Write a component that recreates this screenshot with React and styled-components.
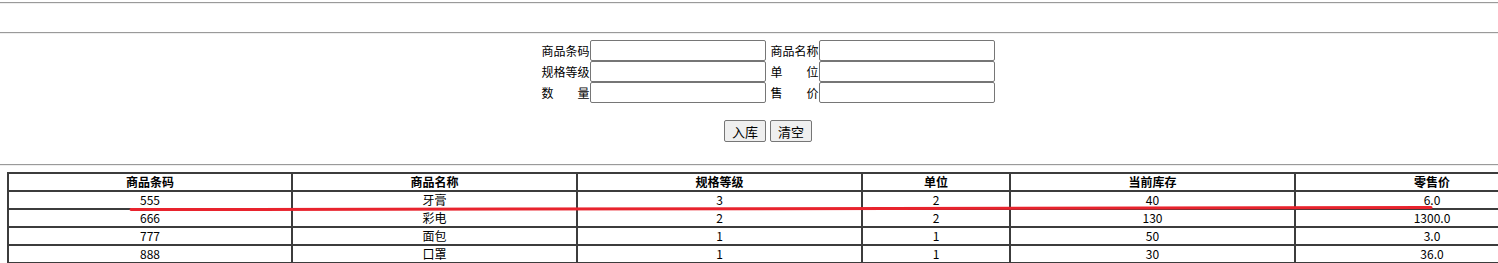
import React from "react";
import styled, { createGlobalStyle } from "styled-components";

const rows = [
    { code: "555", name: "牙膏", spec: "3", unit: "2", stock: "40", price: "6.0" },
    { code: "666", name: "彩电", spec: "2", unit: "2", stock: "130", price: "1300.0" },
    { code: "777", name: "面包", spec: "1", unit: "1", stock: "50", price: "3.0" },
    { code: "888", name: "口罩", spec: "1", unit: "1", stock: "30", price: "36.0" },
];

const columns = [
    { title: "商品条码", key: "code", width: 284 },
    { title: "商品名称", key: "name", width: 285 },
    { title: "规格等级", key: "spec", width: 285 },
    { title: "单位", key: "unit", width: 148 },
    { title: "当前库存", key: "stock", width: 285 },
    { title: "零售价", key: "price", width: 274 },
];

const fields = [
    ["商品条码", "商品名称"],
    ["规格等级", "单　　位"],
    ["数　　量", "售　　价"],
];

const App = () => {
    return (
        <>
            <GlobalStyle />
            <Page>
                <Rule $top={2} $bottom={28} />
                <Rule $top={0} $bottom={6} />
                <StockForm>
                    {fields.map(pair => (
                        <FieldRow key={pair[0]}>
                            <Label>{pair[0]}</Label>
                            <Input />
                            <Label $left>{pair[1]}</Label>
                            <Input />
                        </FieldRow>
                    ))}
                    <ButtonRow>
                        <Button>入库</Button>
                        <Button>清空</Button>
                    </ButtonRow>
                </StockForm>
                <Rule $top={0} $bottom={6} />
                <Table>
                    <colgroup>
                        {columns.map(col => <col key={col.key} style={{ width: col.width }} />)}
                    </colgroup>
                    <thead>
                        <tr>
                            {columns.map(col => <Th key={col.key}>{col.title}</Th>)}
                        </tr>
                    </thead>
                    <tbody>
                        {rows.map(row => (
                            <tr key={row.code}>
                                {columns.map(col => <Td key={col.key}>{row[col.key]}</Td>)}
                            </tr>
                        ))}
                    </tbody>
                </Table>
                <Mark width="1310" height="8" viewBox="0 0 1310 8">
                    <path d="M2 4.6 C 300 4.2, 800 3.4, 1302 2.6" stroke="#e8232d" strokeWidth="3" fill="none" strokeLinecap="round" />
                </Mark>
            </Page>
        </>
    );
};

const GlobalStyle = createGlobalStyle`
    body {
        margin: 0;
        font-family: "Microsoft YaHei", "Noto Sans CJK SC", "Noto Sans", sans-serif;
        font-size: 12px;
        color: #000;
        background: #fff;
        overflow: hidden;
    }
`;

const Page = styled.div`
    position: relative;
    width: 1536px;
`;

const Rule = styled.hr`
    margin: ${props => props.$top}px 0 ${props => props.$bottom}px;
    width: 1498px;
    height: 0;
    border: 0;
    border-top: 1px solid #9a9a9a;
    border-bottom: 1px solid #eeeeee;
`;

const StockForm = styled.form`
    display: flex;
    flex-direction: column;
    align-items: center;
    margin: 0 0 22px;
`;

const FieldRow = styled.div`
    display: flex;
    align-items: center;
    height: 21px;
`;

const Label = styled.span`
    width: 48px;
    margin-left: ${props => (props.$left ? "5px" : "0")};
    line-height: 16px;
    white-space: pre;
`;

const Input = styled.input`
    box-sizing: border-box;
    width: 176px;
    height: 21px;
    margin: 0;
    padding: 1px 2px;
    border: 1px solid #767676;
    border-radius: 2px;
    background: #fff;
`;

const ButtonRow = styled.div`
    display: flex;
    gap: 4px;
    margin-top: 17px;
`;

const Button = styled.button`
    box-sizing: border-box;
    width: 42px;
    height: 22px;
    padding: 0;
    font-family: "Microsoft YaHei", "Noto Sans CJK SC", sans-serif;
    font-size: 13px;
    color: #000;
    background: #efefef;
    border: 1px solid #767676;
    border-radius: 2px;
`;

const Table = styled.table`
    margin-left: 7px;
    border-collapse: collapse;
    table-layout: fixed;
    width: 1561px;
`;

const Th = styled.th`
    border: 2px solid #3c3c3c;
    padding: 0;
    height: 16px;
    line-height: 16px;
    font-size: 12px;
    font-weight: bold;
    text-align: center;
`;

const Td = styled.td`
    border: 2px solid #3c3c3c;
    padding: 0;
    height: 16px;
    line-height: 16px;
    font-size: 12px;
    text-align: center;
`;

const Mark = styled.svg`
    position: absolute;
    left: 129px;
    top: 203px;
    pointer-events: none;
`;

export default App;
